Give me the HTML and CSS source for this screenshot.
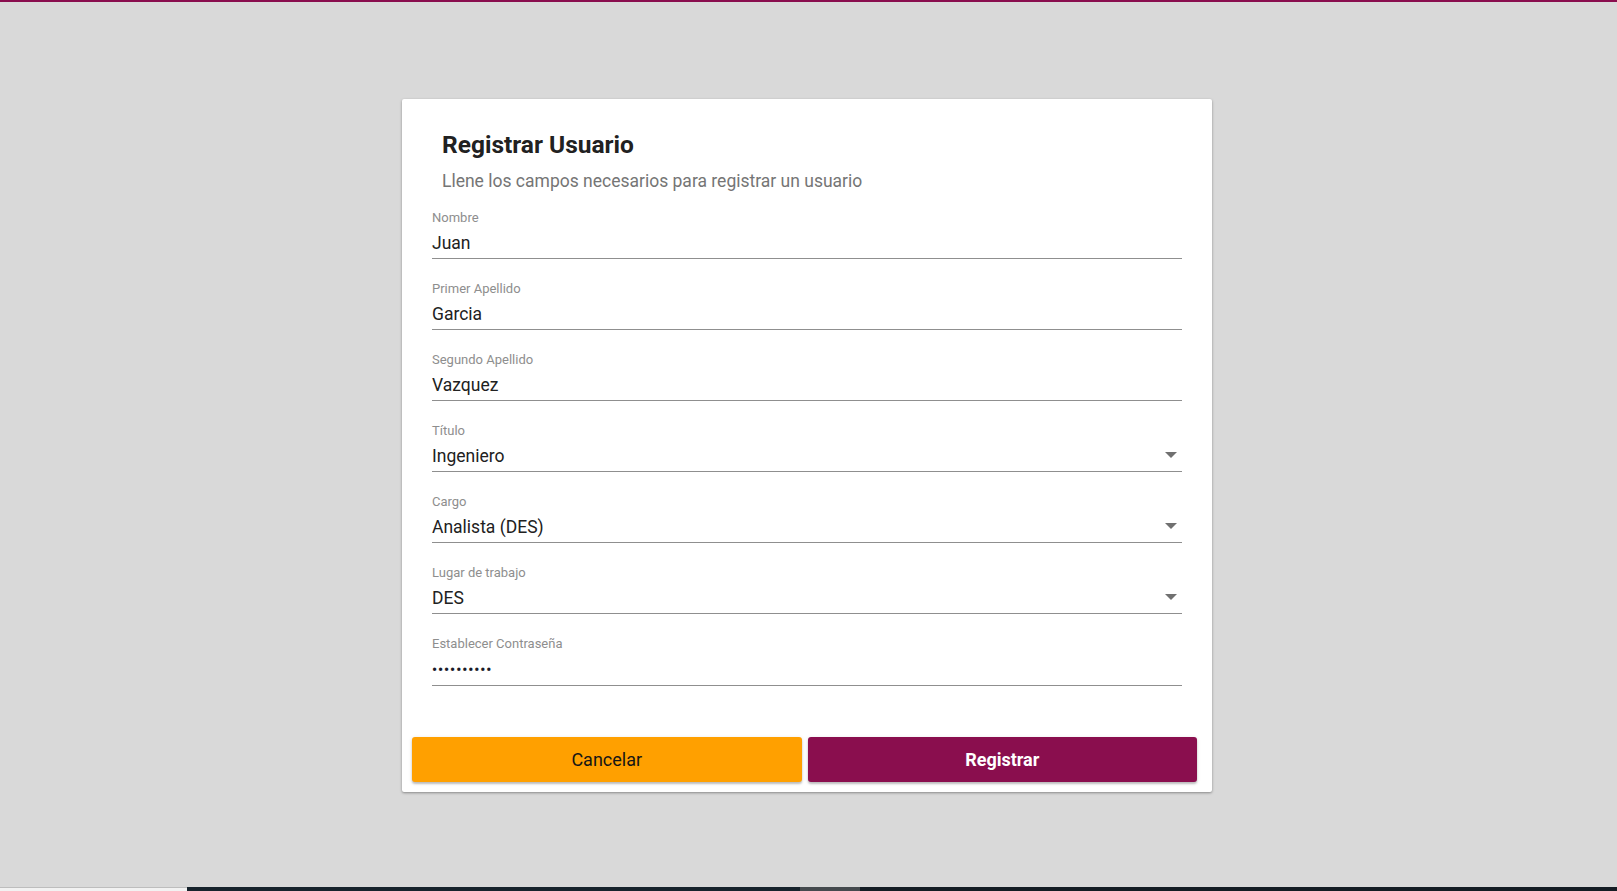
FILE: index.html
```html
<!DOCTYPE html>
<html lang="es">
<head>
<meta charset="utf-8">
<title>Registrar Usuario</title>
<link rel="stylesheet" href="styles.css">
</head>
<body>
<div class="topbar"></div>
<main class="page">
  <section class="card">
    <header class="card-head">
      <h1 class="title">Registrar Usuario</h1>
      <p class="subtitle">Llene los campos necesarios para registrar un usuario</p>
    </header>
    <div class="fields">
      <div class="field">
        <div class="label">Nombre</div>
        <div class="value">Juan</div>
      </div>
      <div class="field">
        <div class="label">Primer Apellido</div>
        <div class="value">Garcia</div>
      </div>
      <div class="field">
        <div class="label">Segundo Apellido</div>
        <div class="value">Vazquez</div>
      </div>
      <div class="field">
        <div class="label">Título</div>
        <div class="value select"><span>Ingeniero</span><i class="arrow"></i></div>
      </div>
      <div class="field">
        <div class="label">Cargo</div>
        <div class="value select"><span>Analista (DES)</span><i class="arrow"></i></div>
      </div>
      <div class="field">
        <div class="label">Lugar de trabajo</div>
        <div class="value select"><span>DES</span><i class="arrow"></i></div>
      </div>
      <div class="field">
        <div class="label">Establecer Contraseña</div>
        <div class="value password"><span class="dots">••••••••••</span></div>
      </div>
    </div>
    <div class="actions">
      <button class="btn btn-cancel">Cancelar</button>
      <button class="btn btn-submit">Registrar</button>
    </div>
  </section>
</main>
<footer class="taskbar">
  <div class="tb-light"></div>
  <div class="tb-dark"></div>
  <div class="tb-mid"></div>
  <div class="tb-dark2"></div>
</footer>
</body>
</html>
```

FILE: styles.css
```css
html, body {
  margin: 0;
  padding: 0;
}
body {
  background: #d9d9d9;
  font-family: Roboto, "Liberation Sans", Arial, sans-serif;
  height: 891px;
  overflow: hidden;
  display: flex;
  flex-direction: column;
}
.topbar {
  height: 2px;
  background: #8a0e4e;
  flex: none;
}
.page {
  flex: 1;
  display: flex;
  justify-content: center;
  align-items: flex-start;
  padding-top: 97px;
  padding-right: 3px;
}
.card {
  width: 810px;
  background: #ffffff;
  border-radius: 2px;
  box-shadow: 0 1px 3px rgba(0,0,0,0.25), 0 1px 2px rgba(0,0,0,0.15);
  padding: 30px 0 10px 0;
  box-sizing: border-box;
}
.card-head {
  padding: 0 41px 0 40px;
}
.title {
  margin: 0;
  font-size: 24.5px;
  line-height: 32px;
  font-weight: 700;
  color: #212121;
}
.subtitle {
  margin: 8px 0 0 0;
  font-size: 17.5px;
  line-height: 24px;
  color: #757575;
}
.fields {
  padding: 17px 30px 0 30px;
  display: flex;
  flex-direction: column;
  gap: 22px;
}
.field {
  display: flex;
  flex-direction: column;
}
.label {
  font-size: 13px;
  line-height: 16px;
  color: #8e8e8e;
}
.value {
  margin-top: 5px;
  font-size: 17.5px;
  line-height: 24px;
  color: #212121;
  padding-bottom: 3px;
  border-bottom: 1px solid #8f8f8f;
}
.select {
  display: flex;
  justify-content: space-between;
  align-items: center;
}
.arrow {
  width: 0;
  height: 0;
  border-left: 6.5px solid transparent;
  border-right: 6.5px solid transparent;
  border-top: 6px solid #707070;
  margin-right: 5px;
  margin-top: -3px;
}
.dots {
  font-size: 14px;
  letter-spacing: 1px;
  font-weight: 700;
  color: #1a1a2a;
}
.actions {
  display: flex;
  gap: 6px;
  padding: 51px 15px 0 10px;
}
.btn {
  flex: 1;
  height: 45px;
  border: none;
  border-radius: 3px;
  font-family: Roboto, "Liberation Sans", Arial, sans-serif;
  font-size: 18px;
  box-shadow: 0 2px 2px rgba(0,0,0,0.2), 0 1px 4px rgba(0,0,0,0.12);
  padding: 0;
}
.btn-cancel {
  background: #ffa000;
  color: #151515;
  font-weight: 400;
}
.btn-submit {
  background: #8a0e4e;
  color: #ffffff;
  font-weight: 700;
}
.taskbar {
  height: 4px;
  flex: none;
  display: flex;
}
.tb-light {
  width: 187px;
  background: #f2f2f2;
  border-top: 1px solid #bdbdbd;
  box-sizing: border-box;
}
.tb-dark {
  width: 613px;
  background: #17232c;
}
.tb-mid {
  width: 60px;
  background: #454a4e;
}
.tb-dark2 {
  flex: 1;
  background: #141d24;
}
```
